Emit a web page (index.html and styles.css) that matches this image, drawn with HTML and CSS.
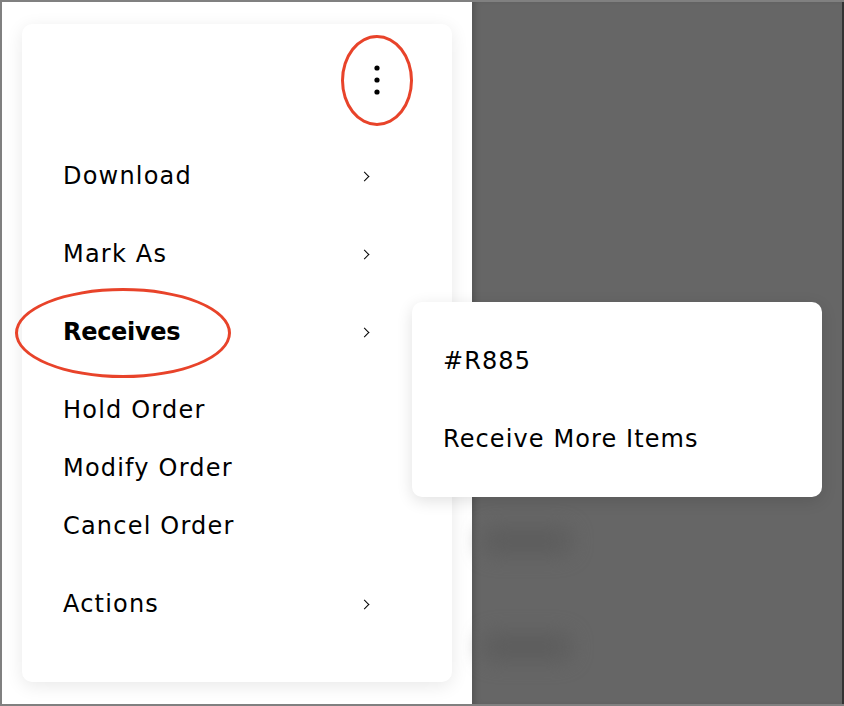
FILE: index.html
```html
<!DOCTYPE html>
<html lang="en">
<head>
    <meta charset="UTF-8">
    <meta name="viewport" content="width=device-width, initial-scale=1.0">
    <title>Order menu</title>
    <link rel="stylesheet" href="styles.css">
</head>
<body>
    <div id="frame">
        <div id="page">
            <div class="menu">
                <div class="menu-head">
                    <span class="kebab">
                        <svg width="6" height="30" viewBox="0 0 6 30">
                            <circle cx="3" cy="3" r="2.6" fill="#000"/>
                            <circle cx="3" cy="15" r="2.6" fill="#000"/>
                            <circle cx="3" cy="27" r="2.6" fill="#000"/>
                        </svg>
                    </span>
                </div>
                <ul class="menu-list">
                    <li class="item sep"><span>Download</span><i class="chev"></i></li>
                    <li class="item sep"><span>Mark As</span><i class="chev"></i></li>
                    <li class="item sep bold"><span>Receives</span><i class="chev"></i></li>
                    <li class="item"><span>Hold Order</span></li>
                    <li class="item"><span>Modify Order</span></li>
                    <li class="item sep"><span>Cancel Order</span></li>
                    <li class="item"><span>Actions</span><i class="chev"></i></li>
                </ul>
            </div>
        </div>
        <div id="overlay">
            <div class="blob"></div>
            <div class="blob"></div>
        </div>

        <ul class="submenu">
            <li class="item"><span>#R885</span></li>
            <li class="item"><span>Receive More Items</span></li>
        </ul>

        <span class="ring ring-kebab"></span>
        <span class="ring ring-receives"></span>
    </div>
</body>
</html>
```

FILE: styles.css
```css
*{
    padding: 0;
    margin: 0;
    box-sizing: border-box;
}
body{
    font-family: "DejaVu Sans", Inter, sans-serif;
    color: #000;
    background: #fff;
}
#frame{
    width: 844px;
    height: 706px;
    position: relative;
    display: flex;
    border: 2px solid #808080;
    border-right: 0;
    overflow: hidden;
}
#page{
    width: 470px;
    padding: 22px 0 0 20px;
    background: #fff;
}
#overlay{
    flex: 1;
    background: #666;
    border-right: 2px solid #333;
    box-shadow: inset 6px 0 6px -3px rgba(0,0,0,0.18);
    padding: 525px 0 0 10px;
}
#overlay .blob{
    width: 90px;
    height: 28px;
    border-radius: 14px;
    background: #5d5d5d;
    filter: blur(10px);
    margin-bottom: 78px;
}

.menu{
    width: 430px;
    height: 658px;
    background: #fff;
    border-radius: 10px;
    box-shadow: 0 4px 18px rgba(0,0,0,0.09);
    padding: 32px 82px 49px 41px;
}
.menu-head{
    height: 48px;
    margin-bottom: 43px;
    display: flex;
    justify-content: flex-end;
    align-items: center;
}
.kebab{
    display: block;
    width: 6px;
    height: 30px;
    margin-right: -10px;
}
.kebab svg{
    display: block;
}
.menu-list, .submenu{
    list-style: none;
}
.item{
    height: 58px;
    display: flex;
    align-items: center;
    justify-content: space-between;
    font-size: 24px;
    letter-spacing: 1.2px;
}
.item.sep{
    margin-bottom: 20px;
}
.item.bold{
    font-weight: 700;
    letter-spacing: -0.3px;
}
.chev{
    display: block;
    width: 7px;
    height: 7px;
    border-top: 1.6px solid #000;
    border-right: 1.6px solid #000;
    transform: rotate(45deg);
    margin-right: 2px;
}

.submenu{
    position: absolute;
    left: 410px;
    top: 300px;
    width: 410px;
    height: 195px;
    background: #fff;
    border-radius: 10px;
    box-shadow: 0 4px 16px rgba(0,0,0,0.12);
    padding: 30px 31px 0 31px;
}
.submenu .item{
    letter-spacing: 1.1px;
}
.submenu .item:first-child{
    margin-bottom: 20px;
}

.ring{
    position: absolute;
    border: 3px solid #e8432a;
    border-radius: 50%;
}
.ring-kebab{
    left: 339px;
    top: 33px;
    width: 72px;
    height: 91px;
}
.ring-receives{
    left: 13px;
    top: 286px;
    width: 216px;
    height: 90px;
}
```
